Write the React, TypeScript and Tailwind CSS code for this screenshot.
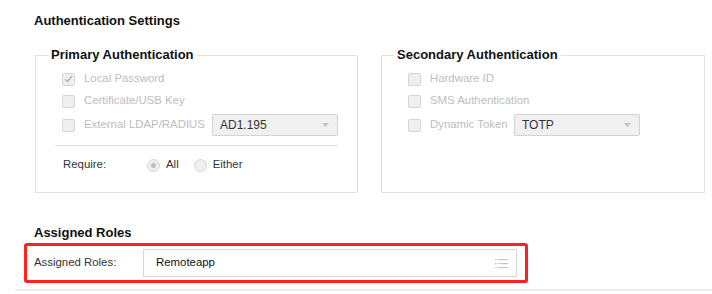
import React from "react";

function Check({ checked = false }: { checked?: boolean }) {
  return (
    <span className="flex h-[13px] w-[13px] shrink-0 items-center justify-center rounded-[2px] border border-[#d6d6d6] bg-[#efefef]">
      {checked && (
        <svg width="9" height="8" viewBox="0 0 9 8">
          <path d="M1 4.2 L3.4 6.5 L8 1.3" fill="none" stroke="#b5b5b5" strokeWidth="1.5" />
        </svg>
      )}
    </span>
  );
}

function Radio({ checked = false }: { checked?: boolean }) {
  return (
    <span className="flex h-[13px] w-[13px] shrink-0 items-center justify-center rounded-full border border-[#d6d6d6] bg-[#efefef]">
      {checked && <span className="h-[5px] w-[5px] rounded-full bg-[#bdbdbd]" />}
    </span>
  );
}

function Select({ value }: { value: string }) {
  return (
    <div className="flex h-[22px] w-[126px] items-center justify-between rounded-[2px] border border-[#d3d3d3] bg-[#f0f0f0] pl-[7px] pr-[8px] text-[12px] text-[#333]">
      <span>{value}</span>
      <svg width="7" height="4" viewBox="0 0 7 4">
        <path d="M0 0 H7 L3.5 4 Z" fill="#c4c4c4" />
      </svg>
    </div>
  );
}

function Row({ label, checked, width, select, top }: { label: string; checked?: boolean; width?: string; select?: string; top?: string }) {
  return (
    <div className={`flex h-[22px] items-center pl-[7px] ${top ?? ""}`}>
      <Check checked={checked} />
      <span className={`ml-[9px] text-[11.4px] text-[#bdbdbd] ${width ?? ""}`}>{label}</span>
      {select && <Select value={select} />}
    </div>
  );
}

export default function App() {
  return (
    <div className="h-[294px] w-[712px] overflow-hidden bg-white font-['Liberation_Sans',Arial,sans-serif]">
      <div className="pl-[34px] pt-[13px] text-[13px] font-bold leading-[16px] text-[#111]">Authentication Settings</div>

      <div className="mt-[18px] flex gap-[23px] pl-[35px] pr-[7px]">
        <fieldset className="w-[323px] border border-[#dfe1e5] px-3 pb-[17px]">
          <legend className="px-[3px] text-[13px] font-bold leading-[16px] text-[#111]">Primary Authentication</legend>
          <div className="px-[7px]">
            <Row label="Local Password" checked top="mt-[5px]" />
            <Row label="Certificate/USB Key" />
            <Row label="External LDAP/RADIUS" width="w-[128px]" select="AD1.195" top="mt-[2px]" />
            <div className="mt-[9px] border-t border-[#dcdcdc]" />
            <div className="mt-[9px] flex h-[20px] items-center pl-[8px] text-[11.4px] text-[#333]">
              <span className="w-[84px]">Require:</span>
              <Radio checked />
              <span className="ml-[6px]">All</span>
              <span className="ml-[15px]">
                <Radio />
              </span>
              <span className="ml-[6px]">Either</span>
            </div>
          </div>
        </fieldset>

        <fieldset className="w-[324px] border border-[#dfe1e5] px-3 pb-[17px]">
          <legend className="px-[3px] text-[13px] font-bold leading-[16px] text-[#111]">Secondary Authentication</legend>
          <div className="px-[7px]">
            <Row label="Hardware ID" top="mt-[5px]" />
            <Row label="SMS Authentication" />
            <Row label="Dynamic Token" width="w-[84px]" select="TOTP" top="mt-[2px]" />
          </div>
        </fieldset>
      </div>

      <div className="mt-[32px] pl-[34px] text-[13px] font-bold leading-[16px] text-[#111]">Assigned Roles</div>
      <div className="ml-[24px] mt-[2px] flex h-[40px] w-[504px] items-center rounded-[3px] border-[3px] border-[#ff2020] pl-[7px] pr-[8px]">
        <span className="w-[109px] text-[11.4px] text-[#333]">Assigned Roles:</span>
        <div className="flex h-[28px] flex-1 items-center justify-between border border-[#d5d7dc] bg-white pl-[12px] pr-[8px] text-[11.4px] text-[#111]">
          <span>Remoteapp</span>
          <svg width="13" height="11" viewBox="0 0 13 11">
            <g fill="#c8c8c8">
              <rect x="0" y="1" width="2" height="1.2" />
              <rect x="3" y="1" width="10" height="1.2" />
              <rect x="0" y="5" width="2" height="1.2" />
              <rect x="3" y="5" width="10" height="1.2" />
              <rect x="0" y="9" width="2" height="1.2" />
              <rect x="3" y="9" width="10" height="1.2" />
            </g>
          </svg>
        </div>
      </div>
      <div className="ml-[15px] mt-[6px] border-t-2 border-[#eceef2]" />
    </div>
  );
}
